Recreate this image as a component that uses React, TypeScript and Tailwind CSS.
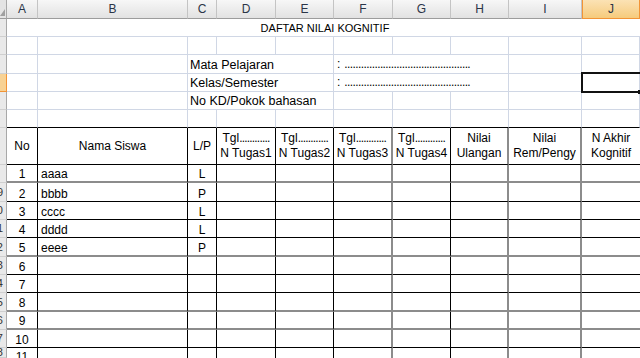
import React from "react";

const LETTERS = ["A", "B", "C", "D", "E", "F", "G", "H", "I", "J"];

const HDR = "flex items-center justify-center border-r border-b border-r-[#c4c4c4] border-b-[#9c9c9c] bg-gradient-to-b from-[#f7f7f7] to-[#e2e2e2] text-[12px] text-[#2a3547]";
const HDR_SEL = "flex items-center justify-center border-l border-r border-b border-[#f29436] bg-gradient-to-b from-[#fbe2b4] to-[#f6cb7c] text-[12px] text-[#2a3547]";
const ROWHDR = "overflow-hidden border-r border-b border-r-[#a8a8a8] border-b-[#cfcfcf] bg-[#e9e9e9] flex items-center";
const ROWHDR_SEL = "overflow-hidden border-r border-b border-r-[#f29436] border-b-[#f29436] bg-[#f8d294] flex items-center";
const GRID = "border-r border-b border-[#d0d7e5]";
const GRID_B = "border-r border-r-[#d0d7e5] border-b border-b-black";

const RB: Record<string, string> = {
  k: "border-r border-r-black",
  g: "border-r-2 border-r-[#8c8c8c]",
  n: "",
};
const BB: Record<string, string> = {
  k: "border-b border-b-black",
  g: "border-b-2 border-b-[#8c8c8c]",
  n: "",
};

const colRight = ["k", "k", "k", "k", "k", "g", "k", "g", "g", "n"];
const rowBottom: Record<number, string> = {
  7: "k",
  8: "g",
  9: "k",
  10: "k",
  11: "k",
  12: "g",
  13: "k",
  14: "k",
  15: "g",
  16: "g",
  17: "k",
  18: "n",
};

const headers: (string | [string, string])[] = [
  "No",
  "Nama Siswa",
  "L/P",
  ["Tgl", "N Tugas1"],
  ["Tgl", "N Tugas2"],
  ["Tgl", "N Tugas3"],
  ["Tgl", "N Tugas4"],
  ["Nilai", "Ulangan"],
  ["Nilai", "Rem/Pengy"],
  ["N Akhir", "Kognitif"],
];

const students = [
  { name: "aaaa", lp: "L" },
  { name: "bbbb", lp: "P" },
  { name: "cccc", lp: "L" },
  { name: "dddd", lp: "L" },
  { name: "eeee", lp: "P" },
];

function RowHead({ n }: { n: number }) {
  return (
    <div className={n === 4 ? ROWHDR_SEL : ROWHDR}>
      <div className="ml-[-23px] w-[26px] shrink-0 text-right text-[11px] leading-none text-[#333]">
        {n >= 9 ? n : ""}
      </div>
    </div>
  );
}

export default function App() {
  const rows: React.ReactNode[] = [];

  rows.push(
    <div key="corner" className="relative border-r border-b border-r-[#a8a8a8] border-b-[#9c9c9c] bg-[#e4e4e4]">
      <div className="absolute right-[1px] bottom-[2px] h-0 w-0 border-l-[5px] border-t-[5px] border-l-transparent border-t-transparent border-b-[7px] border-b-[#a0a0a0]" />
    </div>
  );
  LETTERS.forEach((l, i) =>
    rows.push(
      <div key={"h" + l} className={i === 9 ? HDR_SEL : HDR}>
        {l}
      </div>
    )
  );

  rows.push(<RowHead key="r1" n={1} />);
  rows.push(
    <div key="title" className="col-span-10 flex items-end justify-center border-b border-[#d0d7e5] pb-[2px] text-[11px] leading-none">
      <span className="ml-[3px]">DAFTAR NILAI KOGNITIF</span>
    </div>
  );

  rows.push(<RowHead key="r2" n={2} />);
  for (let c = 0; c < 10; c++) rows.push(<div key={"r2c" + c} className={GRID} />);

  [
    { n: 3, label: "Mata Pelajaran" },
    { n: 4, label: "Kelas/Semester" },
  ].forEach(({ n, label }) => {
    rows.push(<RowHead key={"r" + n} n={n} />);
    rows.push(<div key={"r" + n + "a"} className={GRID} />);
    rows.push(<div key={"r" + n + "b"} className={GRID} />);
    rows.push(
      <div key={"r" + n + "c"} className={"col-span-3 flex items-end pb-[2px] pl-[2px] text-[12.5px] leading-none " + GRID}>
        {label}
      </div>
    );
    rows.push(
      <div key={"r" + n + "f"} className={"col-span-3 flex items-end overflow-hidden whitespace-nowrap pb-[3px] pl-[3px] text-[12px] leading-none " + GRID}>
        <span>:</span>
        <span className="ml-[4px] tracking-[-0.6px]">..............................................</span>
      </div>
    );
    rows.push(<div key={"r" + n + "i"} className={GRID} />);
    if (n === 4) {
      rows.push(
        <div key="r4j" className={"relative " + GRID}>
          <div className="absolute left-[-1px] top-[-2px] right-[-6px] bottom-[-2px] border-2 border-[#111]" />
          <div className="absolute right-[-3px] bottom-[-3px] h-[4px] w-[4px] bg-[#111]" />
        </div>
      );
    } else {
      rows.push(<div key={"r" + n + "j"} className={GRID} />);
    }
  });

  rows.push(<RowHead key="r5" n={5} />);
  rows.push(<div key="r5a" className={GRID} />);
  rows.push(<div key="r5b" className={GRID} />);
  rows.push(
    <div key="r5c" className={"col-span-3 flex items-end pb-[2px] pl-[2px] text-[12.5px] leading-none " + GRID}>
      No KD/Pokok bahasan
    </div>
  );
  for (let c = 5; c < 10; c++) rows.push(<div key={"r5c" + c} className={GRID} />);

  rows.push(<RowHead key="r6" n={6} />);
  for (let c = 0; c < 10; c++) rows.push(<div key={"r6c" + c} className={GRID_B} />);

  rows.push(<RowHead key="r7" n={7} />);
  headers.forEach((h, c) => {
    const cls = "flex flex-col items-center justify-center text-[12px] leading-[15px] whitespace-nowrap overflow-hidden " + RB[colRight[c]] + " " + BB[rowBottom[7]];
    rows.push(
      <div key={"h7" + c} className={cls}>
        {typeof h === "string" ? (
          <span className="pt-[1px]">{h}</span>
        ) : h[0] === "Tgl" ? (
          <>
            <span className="mt-[-1px]">
              Tgl<span className="tracking-[-0.8px]">............</span>
            </span>
            <span>{h[1]}</span>
          </>
        ) : (
          <>
            <span className="mt-[-1px]">{h[0]}</span>
            <span>{h[1]}</span>
          </>
        )}
      </div>
    );
  });

  for (let r = 8; r <= 18; r++) {
    const idx = r - 7;
    const st = students[idx - 1];
    rows.push(<RowHead key={"r" + r} n={r} />);
    for (let c = 0; c < 10; c++) {
      const vert = r === 18 ? " items-start pt-[3px]" : " items-end pb-[1px]";
      const base = "flex overflow-hidden whitespace-nowrap text-[12px] leading-none " + RB[colRight[c]] + " " + BB[rowBottom[r]] + vert;
      let content: React.ReactNode = null;
      let align = "";
      if (c === 0) {
        content = idx;
        align = " justify-center";
      } else if (c === 1) {
        content = st ? st.name : null;
        align = " pl-[3px]";
      } else if (c === 2) {
        content = st ? st.lp : null;
        align = " justify-center";
      }
      rows.push(
        <div key={"d" + r + "-" + c} className={base + align}>
          {content}
        </div>
      );
    }
  }

  return (
    <div className="h-[358px] w-[640px] overflow-hidden bg-white text-black [font-family:'Liberation_Sans',Arial,sans-serif]">
      <div className="grid grid-cols-[7px_31px_150px_29px_59px_58px_59px_58px_58px_73px_58px] grid-rows-[19px_18px_18px_19px_18px_18px_18px_37px_18px_19px_18px_18px_19px_18px_18px_19px_18px_18px_10px]">
        {rows}
      </div>
    </div>
  );
}
